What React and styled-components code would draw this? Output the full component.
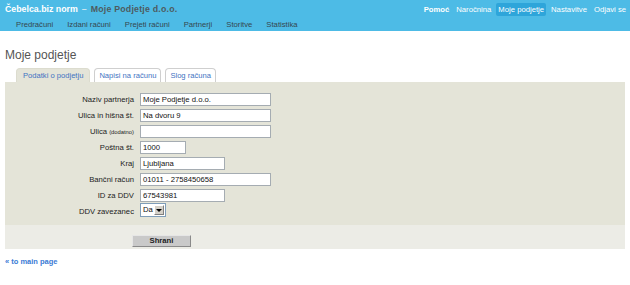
import React from 'react'
import styled, { createGlobalStyle } from 'styled-components'

const GlobalStyle = createGlobalStyle`
  body {
    margin: 0;
    background: #fff;
    font-family: "Liberation Sans", Arial, sans-serif;
  }
`

const Header = styled.header`
  background: #4dbbe6;
  height: 31px;
`

const TopRow = styled.div`
  display: flex;
  align-items: center;
  justify-content: space-between;
  height: 18px;
  padding: 0 2px 0 5px;
`

const Brand = styled.div`
  font-size: 8.8px;
  font-weight: bold;
  color: #fff;
  white-space: nowrap;
  span {
    color: #c9e6f1;
    margin: 0 4px;
  }
  em {
    font-style: normal;
    color: #4d5b61;
    letter-spacing: 0.2px;
  }
`

const RightNav = styled.nav`
  display: flex;
  gap: 3px;
`

const TopLink = styled.a`
  font-size: 7.7px;
  color: #fff;
  padding: 2px 2px;
  border-radius: 2px;
  font-weight: ${p => (p.$bold ? 'bold' : 'normal')};
  background: ${p => (p.$active ? '#2ea5da' : 'transparent')};
  text-decoration: none;
  white-space: nowrap;
`

const SubNav = styled.nav`
  display: flex;
  gap: 14px;
  padding-left: 16px;
  height: 13px;
  align-items: center;
`

const SubLink = styled.a`
  font-size: 7.7px;
  color: #35474f;
  text-decoration: none;
  white-space: nowrap;
`

const Main = styled.main`
  padding: 0 5px;
`

const Title = styled.h1`
  margin: 17px 0 6px;
  font-size: 12px;
  line-height: 14px;
  font-weight: normal;
  color: #555;
`

const Tabs = styled.div`
  display: flex;
  gap: 4px;
  padding-left: 11px;
`

const Tab = styled.div`
  height: 14px;
  box-sizing: border-box;
  padding: 0 ${p => (p.$active ? 6 : 4)}px;
  display: flex;
  align-items: center;
  font-size: 7.6px;
  color: #3f73c2;
  border: 1px solid ${p => (p.$active ? '#dcdccf' : '#cfcfcf')};
  border-bottom: none;
  border-radius: 4px 4px 0 0;
  background: ${p => (p.$active ? '#e4e4d8' : '#fff')};
`

const Panel = styled.section`
  background: #e4e4d8;
`

const Form = styled.div`
  display: grid;
  grid-template-columns: 129px auto;
  column-gap: 6px;
  row-gap: 3px;
  align-items: center;
  justify-items: start;
  padding: 11px 0 8px;
`

const Label = styled.label`
  justify-self: end;
  font-size: 7.7px;
  color: #222;
  white-space: nowrap;
  small {
    font-size: 5.8px;
  }
`

const Input = styled.div`
  box-sizing: border-box;
  width: ${p => p.$w}px;
  height: 13px;
  background: #fff;
  border: 1px solid #a5acb2;
  padding: 0 2px;
  font-size: 7.7px;
  line-height: 11px;
  color: #111;
  white-space: nowrap;
`

const Select = styled.div`
  box-sizing: border-box;
  display: flex;
  width: 26px;
  height: 14px;
  margin-top: -2px;
  background: #fff;
  border: 1px solid #7f9db9;
  font-size: 7.7px;
  color: #111;
`

const SelectValue = styled.span`
  flex: 1;
  padding-left: 2px;
  line-height: 12px;
`

const SelectArrow = styled.span`
  width: 10px;
  margin: 1px;
  background: #d4d0c8;
  border: 1px solid;
  border-color: #fff #808080 #808080 #fff;
  box-sizing: border-box;
  display: flex;
  align-items: center;
  justify-content: center;
  &::after {
    content: '';
    border-left: 3px solid transparent;
    border-right: 3px solid transparent;
    border-top: 3px solid #000;
  }
`

const Footer = styled.div`
  background: #ecece6;
  height: 24px;
  padding: 4px 0 0 127px;
  box-sizing: border-box;
`

const SaveButton = styled.button`
  width: 59px;
  height: 12px;
  padding: 0;
  font-family: inherit;
  font-size: 7.7px;
  font-weight: bold;
  color: #222;
  background: #c9c9c9;
  border: 1px solid;
  border-color: #e6e6e6 #8a8a8a #8a8a8a #e6e6e6;
`

const BackLink = styled.a`
  display: block;
  margin-top: 8px;
  font-size: 7.5px;
  font-weight: bold;
  color: #3a7bd5;
  text-decoration: none;
`

const fields = [
  { label: 'Naziv partnerja', value: 'Moje Podjetje d.o.o.', w: 131 },
  { label: 'Ulica in hišna št.', value: 'Na dvoru 9', w: 131 },
  { label: <>Ulica <small>(dodatno)</small></>, value: '', w: 131 },
  { label: 'Poštna št.', value: '1000', w: 46 },
  { label: 'Kraj', value: 'Ljubljana', w: 85 },
  { label: 'Bančni račun', value: '01011 - 2758450658', w: 131 },
  { label: 'ID za DDV', value: '67543981', w: 85 },
]

export default function App() {
  return (
    <>
      <GlobalStyle />
      <Header>
        <TopRow>
          <Brand>
            Čebelca.biz norm<span>–</span><em>Moje Podjetje d.o.o.</em>
          </Brand>
          <RightNav>
            <TopLink $bold>Pomoć</TopLink>
            <TopLink>Naročnina</TopLink>
            <TopLink $active>Moje podjetje</TopLink>
            <TopLink>Nastavitve</TopLink>
            <TopLink>Odjavi se</TopLink>
          </RightNav>
        </TopRow>
        <SubNav>
          <SubLink>Predračuni</SubLink>
          <SubLink>Izdani računi</SubLink>
          <SubLink>Prejeti računi</SubLink>
          <SubLink>Partnerji</SubLink>
          <SubLink>Storitve</SubLink>
          <SubLink>Statistika</SubLink>
        </SubNav>
      </Header>
      <Main>
        <Title>Moje podjetje</Title>
        <Tabs>
          <Tab $active>Podatki o podjetju</Tab>
          <Tab>Napisi na računu</Tab>
          <Tab>Slog računa</Tab>
        </Tabs>
        <Panel>
          <Form>
            {fields.map((f, i) => (
              <React.Fragment key={i}>
                <Label>{f.label}</Label>
                <Input $w={f.w}>{f.value}</Input>
              </React.Fragment>
            ))}
            <Label>DDV zavezanec</Label>
            <Select>
              <SelectValue>Da</SelectValue>
              <SelectArrow />
            </Select>
          </Form>
          <Footer>
            <SaveButton>Shrani</SaveButton>
          </Footer>
        </Panel>
        <BackLink>« to main page</BackLink>
      </Main>
    </>
  )
}
